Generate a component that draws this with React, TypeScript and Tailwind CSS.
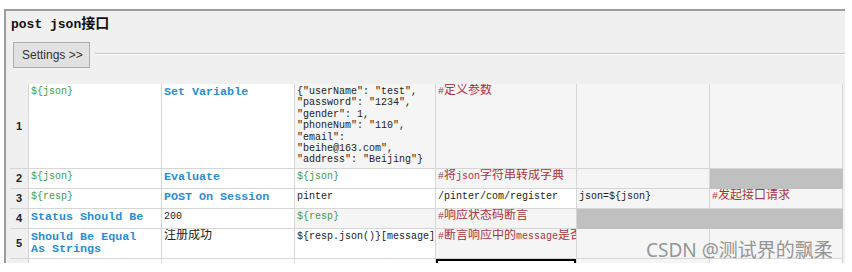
import React from 'react';

type Kind = 'var' | 'kw' | 'txt' | 'cmt';
type Bg = 'w' | 'l' | 'd';
type Cell = { lines?: string[]; kind?: Kind; bg: Bg; selected?: boolean };

const CJK = /([\u3400-\u9fff]+)/;

// ascii stays in the 10px mono, chinese runs get the wider 12px glyphs
function Mixed({ text }: { text: string }) {
  return (
    <>
      {text.split(CJK).map((part, i) =>
        CJK.test(part) ? (
          <span key={i} className="text-[12px]">
            {part}
          </span>
        ) : (
          <React.Fragment key={i}>{part}</React.Fragment>
        )
      )}
    </>
  );
}

const kindClass: Record<Kind, string> = {
  var: 'text-[#3d9c45] text-[10px] leading-[11.4px]',
  kw: 'text-[#2a8dd0] text-[11.7px] font-bold leading-[12px]',
  txt: 'text-[#222] text-[10px] leading-[11.4px]',
  cmt: 'text-[#a8343a] text-[10px] leading-[11.4px]',
};

const bgClass: Record<Bg, string> = {
  w: 'bg-white border-[#d6d6d6]',
  l: 'bg-[#f5f5f5] border-[#d6d6d6]',
  d: 'bg-[#c0c0c0] border-[#c0c0c0]',
};

const jsonLines = [
  '{"userName": "test",',
  '"password": "1234",',
  '"gender": 1,',
  '"phoneNum": "110",',
  '"email":',
  '"beihe@163.com",',
  '"address": "Beijing"}',
];

const rows: { n: string; h: string; cells: Cell[] }[] = [
  {
    n: '1',
    h: 'h-[85px]',
    cells: [
      { lines: ['${json}'], kind: 'var', bg: 'w' },
      { lines: ['Set Variable'], kind: 'kw', bg: 'w' },
      { lines: jsonLines, kind: 'txt', bg: 'l' },
      { lines: ['#定义参数'], kind: 'cmt', bg: 'l' },
      { bg: 'l' },
      { bg: 'l' },
    ],
  },
  {
    n: '2',
    h: 'h-[20px]',
    cells: [
      { lines: ['${json}'], kind: 'var', bg: 'w' },
      { lines: ['Evaluate'], kind: 'kw', bg: 'w' },
      { lines: ['${json}'], kind: 'var', bg: 'w' },
      { lines: ['#将json字符串转成字典'], kind: 'cmt', bg: 'l' },
      { bg: 'l' },
      { bg: 'd' },
    ],
  },
  {
    n: '3',
    h: 'h-[20px]',
    cells: [
      { lines: ['${resp}'], kind: 'var', bg: 'w' },
      { lines: ['POST On Session'], kind: 'kw', bg: 'w' },
      { lines: ['pinter'], kind: 'txt', bg: 'w' },
      { lines: ['/pinter/com/register'], kind: 'txt', bg: 'w' },
      { lines: ['json=${json}'], kind: 'txt', bg: 'l' },
      { lines: ['#发起接口请求'], kind: 'cmt', bg: 'l' },
    ],
  },
  {
    n: '4',
    h: 'h-[20px]',
    cells: [
      { lines: ['Status Should Be'], kind: 'kw', bg: 'w' },
      { lines: ['200'], kind: 'txt', bg: 'w' },
      { lines: ['${resp}'], kind: 'var', bg: 'l' },
      { lines: ['#响应状态码断言'], kind: 'cmt', bg: 'l' },
      { bg: 'd' },
      { bg: 'd' },
    ],
  },
  {
    n: '5',
    h: 'h-[30px]',
    cells: [
      { lines: ['Should Be Equal', 'As Strings'], kind: 'kw', bg: 'w' },
      { lines: ['注册成功'], kind: 'txt', bg: 'w' },
      { lines: ['${resp.json()}[message]'], kind: 'txt', bg: 'w' },
      { lines: ['#断言响应中的message是否'], kind: 'cmt', bg: 'l' },
      { bg: 'l' },
      { bg: 'l' },
    ],
  },
  {
    n: '',
    h: 'h-[30px]',
    cells: [
      { bg: 'w' },
      { bg: 'w' },
      { bg: 'w' },
      { bg: 'w', selected: true },
      { bg: 'l' },
      { bg: 'w' },
    ],
  },
];

const colWidths = ['w-[133px]', 'w-[133px]', 'w-[141px]', 'w-[141px]', 'w-[133px]', 'w-[133px]'];

function GridCell({ cell, width }: { cell: Cell; width: string }) {
  return (
    <div
      className={`${width} shrink-0 h-full box-border border-r border-b overflow-hidden whitespace-nowrap pl-[2px] pt-[2px] ${bgClass[cell.bg]} ${
        cell.selected ? 'shadow-[inset_0_0_0_2px_#000]' : ''
      }`}
    >
      {cell.lines && cell.kind && (
        <div className={kindClass[cell.kind]}>
          {cell.lines.map((l, i) => (
            <div key={i}>
              <Mixed text={l} />
            </div>
          ))}
        </div>
      )}
    </div>
  );
}

export default function App() {
  return (
    <div
      className="relative w-[852px] h-[272px] bg-white overflow-hidden"
      style={{ fontFamily: '"Liberation Mono", "Noto Sans CJK SC", monospace' }}
    >
      <div className="ml-[4px] mt-[9px] w-[841px] h-[254px] box-border bg-[#f0f0f0] border-t-2 border-l-2 border-[#9c9c9c] flex flex-col overflow-hidden">
        {/* title */}
        <div className="pl-[5px] pt-[5px] leading-[16px] text-[13px] font-bold text-[#111] whitespace-nowrap">
          post json<span className="text-[14px]">接口</span>
        </div>

        {/* settings bar */}
        <div className="flex items-start mt-[9px] ml-[7px]">
          <button
            className="w-[77px] h-[26px] bg-[#e1e1e1] border border-[#adadad] text-[12px] text-[#333] text-left pl-[8px]"
            style={{ fontFamily: '"Liberation Sans", Arial, sans-serif' }}
          >
            Settings &gt;&gt;
          </button>
          <div className="flex-1 ml-[5px] mt-[11px] border-t border-b border-t-[#c6c6c6] border-b-white" />
        </div>

        {/* keyword grid */}
        <div className="mt-[16px] ml-[4px] w-[833px] flex flex-col">
          {rows.map((row, ri) => (
            <div key={ri} className={`flex shrink-0 ${row.h}`}>
              <div
                className="w-[19px] shrink-0 h-full box-border border-r border-b border-[#d6d6d6] bg-[#f0f0f0] flex items-center justify-center text-[11px] font-bold text-[#222]"
                style={{ fontFamily: '"Liberation Sans", Arial, sans-serif' }}
              >
                {row.n}
              </div>
              {row.cells.map((c, ci) => (
                <GridCell key={ci} cell={c} width={colWidths[ci]} />
              ))}
            </div>
          ))}
        </div>
      </div>

      {/* watermark */}
      <div
        className="absolute left-[646px] top-[241px] text-[19px] leading-[19px] text-[#959595] whitespace-nowrap"
        style={{ fontFamily: '"Noto Sans", "Noto Sans CJK SC", sans-serif' }}
      >
        CSDN @测试界的飘柔
      </div>
    </div>
  );
}
